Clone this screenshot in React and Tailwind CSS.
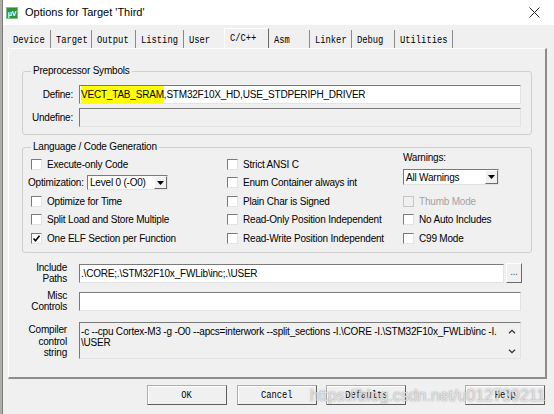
import React from "react";

const sunken =
  "border border-t-[#7a7a7a] border-l-[#7a7a7a] border-r-[#e3e3e3] border-b-[#e3e3e3]";
const raised =
  "border border-t-[#ffffff] border-l-[#ffffff] border-r-[#696969] border-b-[#696969] bg-[#f0f0f0]";
const mono =
  "inline-block origin-left scale-x-[0.8] whitespace-nowrap font-['Liberation_Mono','Courier_New',monospace] text-[11px] tracking-normal";
const monoBtn =
  "inline-block origin-center scale-x-[0.8] whitespace-nowrap font-['Liberation_Mono','Courier_New',monospace] text-[11px] tracking-normal";

const tabs = [
  { label: "Device", w: "w-[43px]" },
  { label: "Target", w: "w-[41px]" },
  { label: "Output", w: "w-[44px]" },
  { label: "Listing", w: "w-[48px]" },
  { label: "User", w: "w-[40px]", nosep: true },
  { label: "C/C++", w: "w-[45px]", active: true },
  { label: "Asm", w: "w-[41px]" },
  { label: "Linker", w: "w-[42px]" },
  { label: "Debug", w: "w-[43px]" },
  { label: "Utilities", w: "w-[58px]" },
];

const CheckBox = ({ label, checked, disabled }) => (
  <div className="flex h-[18.5px] items-center">
    <span
      className={`flex h-[11px] w-[11px] shrink-0 items-center justify-center ${
        disabled ? "border border-[#c6c6c6] bg-[#f0f0f0]" : sunken + " bg-white"
      }`}
    >
      {checked && (
        <svg width="9" height="9" viewBox="0 0 9 9">
          <polyline points="1.5,4.5 3.5,6.8 7.5,1.8" fill="none" stroke="#000" strokeWidth="1.6" />
        </svg>
      )}
    </span>
    <span className={`ml-[5px] whitespace-nowrap ${disabled ? "text-[#a3a3a3]" : "text-black"}`}>{label}</span>
  </div>
);

const Select = ({ value, cls }) => (
  <div className={`flex items-stretch bg-white ${sunken} ${cls}`}>
    <span className="flex flex-1 items-center pl-[2px] whitespace-nowrap">{value}</span>
    <span className={`flex w-[13px] items-center justify-center ${raised}`}>
      <svg width="7" height="4" viewBox="0 0 7 4">
        <path d="M0 0h7L3.5 4z" fill="#000" />
      </svg>
    </span>
  </div>
);

const Button = ({ label }) => (
  <div className="flex h-[20px] w-[80px] items-center justify-center border border-[#adadad] border-r-[#5e5e5e] border-b-[#5e5e5e] bg-[#f0f0f0] shadow-[inset_1px_1px_0_#ffffff]">
    <span className={monoBtn}>{label}</span>
  </div>
);

export default function App() {
  return (
    <div className="flex h-[414px] w-[554px] overflow-hidden bg-[#f0f0f0] font-['Liberation_Sans',Arial,sans-serif] text-[10px] tracking-[-0.2px] text-black">
      {/* window edge */}
      <div className="w-[3px] shrink-0 border-r border-[#7c7c7c] bg-[#b0aca6]" />

      <div className="flex w-[551px] flex-col">
        {/* title bar */}
        <div className="flex h-[25px] shrink-0 items-center bg-white pl-[3px]">
          <svg width="12" height="12" viewBox="0 0 12 12">
            <rect x="0" y="0" width="12" height="12" fill="#2f8f3a" />
            <rect x="0.5" y="0.5" width="11" height="11" fill="none" stroke="#7cc47f" strokeWidth="1" />
            <text x="6" y="8.6" fontSize="7" fontWeight="bold" fill="#fff" textAnchor="middle" fontFamily="Liberation Sans, Arial, sans-serif">
              μV
            </text>
          </svg>
          <span className="ml-[7px] text-[11px] tracking-normal">Options for Target 'Third'</span>
          <svg className="mr-[14px] ml-auto" width="11" height="11" viewBox="0 0 11 11">
            <path d="M0.5 0.5L10.5 10.5M10.5 0.5L0.5 10.5" stroke="#222" strokeWidth="1" />
          </svg>
        </div>

        {/* tabs */}
        <div className="flex h-[23px] shrink-0 items-end pl-[5px]">
          {tabs.map((t) =>
            t.active ? (
              <div
                key={t.label}
                className={`${t.w} h-[20px] overflow-hidden border-t border-l border-r border-t-white border-l-white border-r-[#696969] pt-[3px] pl-[5px] leading-[12px]`}
              >
                <span className={mono}>{t.label}</span>
              </div>
            ) : (
              <div
                key={t.label}
                className={`${t.w} h-[18px] overflow-hidden pt-[4px] pl-[5px] leading-[12px] ${
                  t.nosep ? "" : "border-r border-r-[#8a8a8a]"
                }`}
              >
                <span className={mono}>{t.label}</span>
              </div>
            )
          )}
        </div>

        {/* tab panel */}
        <div className="ml-[5px] flex h-[331px] w-[539px] shrink-0 flex-col border-t border-l border-t-white border-l-white border-r-2 border-b-2 border-r-[#8c8c8c] border-b-[#8c8c8c]">
          {/* Preprocessor Symbols */}
          <fieldset className="mt-[17px] ml-[13px] w-[510px] rounded-[3px] border border-[#cfcfcf] pb-[7px]">
            <legend className="ml-[8px] px-[2px] leading-[10px]">Preprocessor Symbols</legend>
            <div className="mt-[9px] flex items-center">
              <span className="w-[50px] text-right">Define:</span>
              <div className={`ml-[6px] flex h-[19px] w-[442px] items-center bg-white pl-[1px] ${sunken}`}>
                <span className="bg-[#ffff00] py-[1px]">VECT_TAB_SRAM</span>
                <span>,STM32F10X_HD,USE_STDPERIPH_DRIVER</span>
              </div>
            </div>
            <div className="mt-[4px] flex items-center">
              <span className="w-[50px] text-right">Undefine:</span>
              <div className={`ml-[6px] h-[19px] w-[442px] bg-[#f0f0f0] ${sunken}`} />
            </div>
          </fieldset>

          {/* Language / Code Generation */}
          <fieldset className="mt-[7px] ml-[13px] w-[510px] rounded-[3px] border border-[#cfcfcf] pb-[4.5px]">
            <legend className="ml-[8px] px-[2px] leading-[10px]">Language / Code Generation</legend>
            <div className="flex pl-[8px]">
              <div className="flex w-[196px] flex-col pt-[3px]">
                <CheckBox label="Execute-only Code" />
                <div className="flex h-[18.5px] items-center">
                  <span className="-ml-[3px] w-[57px] whitespace-nowrap">Optimization:</span>
                  <Select value="Level 0 (-O0)" cls="ml-[2px] h-[15px] w-[81px]" />
                </div>
                <CheckBox label="Optimize for Time" />
                <CheckBox label="Split Load and Store Multiple" />
                <CheckBox label="One ELF Section per Function" checked />
              </div>
              <div className="flex w-[176px] flex-col pt-[3px]">
                <CheckBox label="Strict ANSI C" />
                <CheckBox label="Enum Container always int" />
                <CheckBox label="Plain Char is Signed" />
                <CheckBox label="Read-Only Position Independent" />
                <CheckBox label="Read-Write Position Independent" />
              </div>
              <div className="flex flex-col">
                <span className="h-[12px] leading-[12px]">Warnings:</span>
                <Select value="All Warnings" cls="mt-[5px] h-[16px] w-[96px]" />
                <div className="mt-[7px] flex flex-col">
                  <CheckBox label="Thumb Mode" disabled />
                  <CheckBox label="No Auto Includes" />
                  <CheckBox label="C99 Mode" />
                </div>
              </div>
            </div>
          </fieldset>

          {/* paths */}
          <div className="mt-[9px] flex items-center">
            <span className="w-[58px] text-right leading-[11px]">
              Include
              <br />
              Paths
            </span>
            <div className={`ml-[12px] flex h-[19px] w-[425px] items-center bg-white pl-[1px] ${sunken}`}>
              .\CORE;.\STM32F10x_FWLib\inc;.\USER
            </div>
            <div className={`ml-[2px] flex h-[20px] w-[16px] items-end justify-center pb-[3px] text-[#555] ${raised} border-r-[#8a8a8a] border-b-[#8a8a8a]`}>
              ...
            </div>
          </div>
          <div className="mt-[6px] flex items-center">
            <span className="w-[58px] text-right leading-[11px]">
              Misc
              <br />
              Controls
            </span>
            <div className={`ml-[12px] h-[19px] w-[442px] bg-white ${sunken}`} />
          </div>
          <div className="mt-[10px] flex items-start">
            <span className="mt-[2px] w-[58px] text-right leading-[11.5px]">
              Compiler
              <br />
              control
              <br />
              string
            </span>
            <div className={`ml-[12px] flex h-[37px] w-[442px] bg-[#f0f0f0] ${sunken}`}>
              <div className="flex-1 overflow-hidden pt-[4px] pl-[1px] leading-[10.5px] whitespace-nowrap">
                -c --cpu Cortex-M3 -g -O0 --apcs=interwork --split_sections -I.\CORE -I.\STM32F10x_FWLib\inc -I.
                <br />
                \USER
              </div>
              <div className="flex w-[17px] flex-col items-center justify-between pt-[6px] pb-[4px]">
                <svg width="8" height="5" viewBox="0 0 8 5">
                  <polyline points="1,4.3 4,1.3 7,4.3" fill="none" stroke="#333" strokeWidth="1.3" />
                </svg>
                <svg width="8" height="5" viewBox="0 0 8 5">
                  <polyline points="1,0.7 4,3.7 7,0.7" fill="none" stroke="#333" strokeWidth="1.3" />
                </svg>
              </div>
            </div>
          </div>
        </div>

        {/* buttons */}
        <div className="relative mt-[6px] flex pl-[144px]">
          <Button label="OK" />
          <div className="ml-[10px]">
            <Button label="Cancel" />
          </div>
          <div className="ml-[9px]">
            <Button label="Defaults" />
          </div>
          <div className="ml-[59px]">
            <Button label="Help" />
          </div>
          <span className="pointer-events-none absolute top-[-1px] left-[307px] text-[16px] tracking-normal whitespace-nowrap text-white/70 [text-shadow:0_0_1.5px_#7a7a7a]">
            https://blog.csdn.net/u012739211
          </span>
        </div>
      </div>
    </div>
  );
}
